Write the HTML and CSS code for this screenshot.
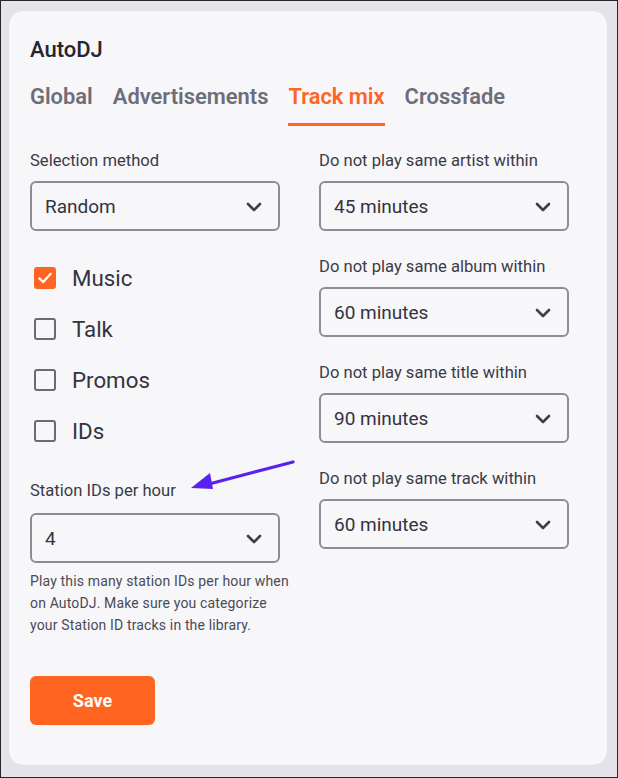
FILE: index.html
```html
<!DOCTYPE html>
<html>
<head>
<meta charset="utf-8">
<link rel="stylesheet" href="styles.css">
</head>
<body>
<div class="frame">
  <div class="card">
    <h1 class="title">AutoDJ</h1>
    <nav class="tabs">
      <span class="tab">Global</span>
      <span class="tab">Advertisements</span>
      <span class="tab active">Track mix</span>
      <span class="tab">Crossfade</span>
    </nav>
    <div class="grid">
      <div class="col">
        <div class="label">Selection method</div>
        <div class="select"><span>Random</span><svg class="chev" width="16" height="10" viewBox="0 0 16 10"><path d="M2 2 L8 8 L14 2" fill="none" stroke="#3f3e4a" stroke-width="2.6" stroke-linecap="round" stroke-linejoin="round"/></svg></div>
        <div class="checks">
          <div class="check"><span class="box on"><svg width="16" height="14" viewBox="0 0 16 14"><path d="M2.5 7.5 L6.2 11 L13.5 3" fill="none" stroke="#fff" stroke-width="2.4" stroke-linecap="round" stroke-linejoin="round"/></svg></span>Music</div>
          <div class="check"><span class="box"></span>Talk</div>
          <div class="check"><span class="box"></span>Promos</div>
          <div class="check"><span class="box"></span>IDs</div>
        </div>
        <div class="label ids-label">Station IDs per hour</div>
        <div class="select"><span>4</span><svg class="chev" width="16" height="10" viewBox="0 0 16 10"><path d="M2 2 L8 8 L14 2" fill="none" stroke="#3f3e4a" stroke-width="2.6" stroke-linecap="round" stroke-linejoin="round"/></svg></div>
        <p class="help">Play this many station IDs per hour when on AutoDJ. Make sure you categorize your Station ID tracks in the library.</p>
        <button class="save">Save</button>
      </div>
      <div class="col">
        <div class="label">Do not play same artist within</div>
        <div class="select"><span>45 minutes</span><svg class="chev" width="16" height="10" viewBox="0 0 16 10"><path d="M2 2 L8 8 L14 2" fill="none" stroke="#3f3e4a" stroke-width="2.6" stroke-linecap="round" stroke-linejoin="round"/></svg></div>
        <div class="label gap">Do not play same album within</div>
        <div class="select"><span>60 minutes</span><svg class="chev" width="16" height="10" viewBox="0 0 16 10"><path d="M2 2 L8 8 L14 2" fill="none" stroke="#3f3e4a" stroke-width="2.6" stroke-linecap="round" stroke-linejoin="round"/></svg></div>
        <div class="label gap">Do not play same title within</div>
        <div class="select"><span>90 minutes</span><svg class="chev" width="16" height="10" viewBox="0 0 16 10"><path d="M2 2 L8 8 L14 2" fill="none" stroke="#3f3e4a" stroke-width="2.6" stroke-linecap="round" stroke-linejoin="round"/></svg></div>
        <div class="label gap">Do not play same track within</div>
        <div class="select"><span>60 minutes</span><svg class="chev" width="16" height="10" viewBox="0 0 16 10"><path d="M2 2 L8 8 L14 2" fill="none" stroke="#3f3e4a" stroke-width="2.6" stroke-linecap="round" stroke-linejoin="round"/></svg></div>
      </div>
    </div>
    <svg class="arrow" width="110" height="34" viewBox="0 0 110 34">
      <path d="M104 3 L20 25" fill="none" stroke="#5a22ee" stroke-width="3.2" stroke-linecap="round"/>
      <path d="M2 29 L21 14 L24 30 Z" fill="#5a22ee"/>
    </svg>
  </div>
</div>
</body>
</html>
```

FILE: styles.css
```css
* { box-sizing: border-box; }
html, body { margin: 0; padding: 0; }
body {
  font-family: Roboto, "Liberation Sans", sans-serif;
  background: #e4e3e7;
}
.frame {
  width: 618px;
  height: 778px;
  border: 1px solid #262626;
  padding: 10px 10px 12px 8px;
  display: flex;
  background: #e4e3e7;
}
.card {
  position: relative;
  flex: 1;
  background: #f7f7f9;
  border-radius: 14px;
  padding: 27px 21px 0 21px;
  box-shadow: 0 0 1px rgba(0,0,0,0.08);
}
.title {
  margin: 0;
  font-size: 22px;
  line-height: 24px;
  font-weight: 500;
  color: #26252e;
}
.tabs {
  display: flex;
  gap: 20px;
  margin-top: 23px;
}
.tab {
  font-size: 21.9px;
  line-height: 24px;
  font-weight: 600;
  color: #6e6d7a;
  padding-bottom: 14px;
  border-bottom: 3px solid transparent;
}
.tab.active {
  color: #ff6422;
  border-bottom-color: #ff6422;
}
.grid {
  display: grid;
  grid-template-columns: 250px 250px;
  column-gap: 39px;
  margin-top: 25px;
}
.col { display: flex; flex-direction: column; align-items: flex-start; }
.label {
  font-size: 16.6px;
  line-height: 20px;
  color: #3b3a47;
  margin-bottom: 10px;
}
.label.gap { margin-top: 26px; }
.select {
  width: 250px;
  height: 50px;
  border: 2px solid #8e8d96;
  border-radius: 6px;
  display: flex;
  align-items: center;
  justify-content: space-between;
  padding: 1px 16px 0 13px;
  font-size: 19px;
  color: #34333f;
}
.chev { display: block; }
.checks { margin-top: 21px; display: flex; flex-direction: column; }
.check {
  height: 51px;
  display: flex;
  align-items: center;
  font-size: 22.3px;
  color: #34333f;
}
.box {
  width: 22px;
  height: 22px;
  margin-left: 4px;
  margin-right: 16px;
  border: 2px solid #6b6a75;
  border-radius: 3px;
  display: flex;
  align-items: center;
  justify-content: center;
}
.box.on {
  background: #ff6422;
  border-color: #ff6422;
}
.ids-label { margin-top: 25px; margin-bottom: 12px; }
.help {
  margin: 7px 0 0 0;
  font-size: 14px;
  letter-spacing: 0.15px;
  line-height: 22px;
  color: #4b4a57;
  width: 264px;
}
.save {
  margin-top: 40px;
  width: 125px;
  height: 49px;
  border: none;
  border-radius: 6px;
  background: #ff6420;
  color: #fff;
  font-family: Roboto, "Liberation Sans", sans-serif;
  font-size: 18px;
  font-weight: 700;
}
.arrow {
  position: absolute;
  left: 180px;
  top: 448px;
}
```
